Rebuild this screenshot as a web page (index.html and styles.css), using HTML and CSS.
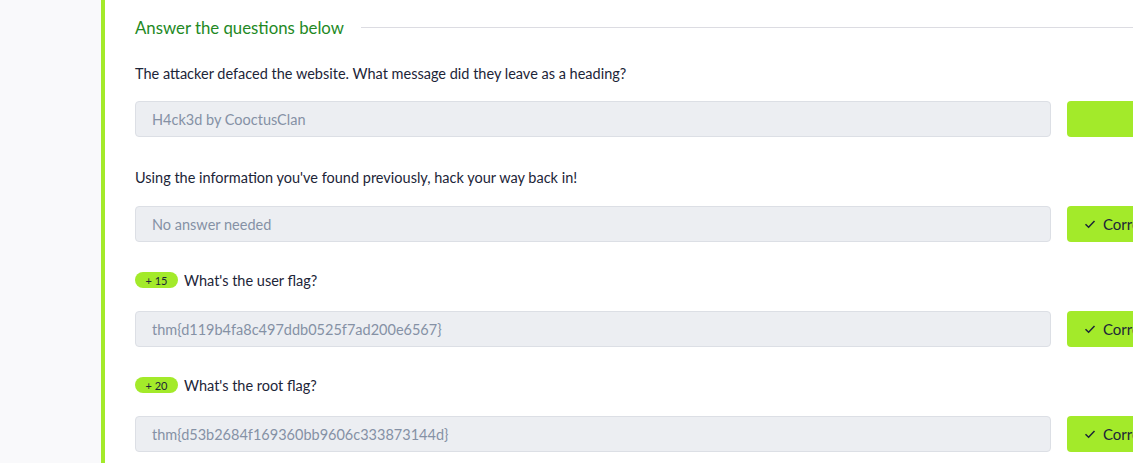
FILE: index.html
```html
<!DOCTYPE html>
<html>
<head>
<meta charset="utf-8">
<link rel="stylesheet" href="styles.css">
</head>
<body>
<div class="page">
  <aside class="sidebar"></aside>
  <main class="content">
    <div class="heading-row">
      <h2 class="heading">Answer the questions below</h2>
      <div class="rule"></div>
    </div>

    <section class="question">
      <p class="qtext">The attacker defaced the website. What message did they leave as a heading?</p>
      <div class="answer-row">
        <div class="answer">H4ck3d by CooctusClan</div>
        <div class="btn"></div>
      </div>
    </section>

    <section class="question">
      <p class="qtext">Using the information you've found previously, hack your way back in!</p>
      <div class="answer-row">
        <div class="answer">No answer needed</div>
        <div class="btn"><svg class="check" viewBox="0 0 12 12"><path d="M1.5 6.2 L4.6 9.2 L10.5 3" fill="none" stroke="#1c2538" stroke-width="1.5"/></svg><span>Correct Answer</span></div>
      </div>
    </section>

    <section class="question bonus">
      <p class="qtext"><span class="badge">+ 15</span>What's the user flag?</p>
      <div class="answer-row">
        <div class="answer">thm{d119b4fa8c497ddb0525f7ad200e6567}</div>
        <div class="btn"><svg class="check" viewBox="0 0 12 12"><path d="M1.5 6.2 L4.6 9.2 L10.5 3" fill="none" stroke="#1c2538" stroke-width="1.5"/></svg><span>Correct Answer</span></div>
      </div>
    </section>

    <section class="question bonus">
      <p class="qtext"><span class="badge">+ 20</span>What's the root flag?</p>
      <div class="answer-row">
        <div class="answer">thm{d53b2684f169360bb9606c333873144d}</div>
        <div class="btn"><svg class="check" viewBox="0 0 12 12"><path d="M1.5 6.2 L4.6 9.2 L10.5 3" fill="none" stroke="#1c2538" stroke-width="1.5"/></svg><span>Correct Answer</span></div>
      </div>
    </section>
  </main>
</div>
</body>
</html>
```

FILE: styles.css
```css
* { box-sizing: border-box; }
html, body { margin: 0; padding: 0; }
body {
  font-family: Lato, "Open Sans", sans-serif;
  background: #ffffff;
  overflow: hidden;
}
.page {
  display: flex;
  width: 1133px;
  height: 463px;
  overflow: hidden;
}
.sidebar {
  flex: none;
  width: 105px;
  background: #f9f9fb;
  border-right: 4px solid #a3ea2a;
}
.content {
  flex: none;
  width: 1100px;
  padding: 14px 0 0 30px;
}
.heading-row {
  display: flex;
  align-items: center;
  gap: 17px;
  height: 26px;
}
.heading {
  margin: 0;
  font-size: 16.8px;
  font-weight: 400;
  color: #23891f;
  white-space: nowrap;
}
.rule {
  flex: 1;
  height: 1px;
  background: #dcdce2;
}
.question {
  margin-top: 20px;
}
.question + .question { margin-top: 27px; }
.question.bonus { margin-top: 25px; }
.qtext {
  margin: 0;
  height: 26px;
  display: flex;
  align-items: center;
  font-size: 14.5px;
  color: #1c2538;
}
.answer-row {
  display: flex;
  gap: 16px;
  margin-top: 15px;
}
.question + .question .answer-row { margin-top: 16px; }
.question.bonus .answer-row { margin-top: 18px; }
.answer {
  width: 916px;
  height: 36px;
  flex: none;
  background: #eceef2;
  border: 1px solid #dcdfe5;
  border-radius: 4px;
  padding-left: 16px;
  display: flex;
  align-items: center;
  font-size: 14.5px;
  color: #8591a5;
}
.btn {
  flex: none;
  width: 160px;
  height: 36px;
  background: #a3ea2a;
  border-radius: 4px;
  display: flex;
  align-items: center;
  padding-left: 17px;
  gap: 7px;
  font-size: 15px;
  color: #1c2538;
  white-space: nowrap;
}
.check { width: 12px; height: 12px; }
.badge {
  display: inline-flex;
  align-items: center;
  justify-content: center;
  width: 43px;
  height: 16px;
  border-radius: 8px;
  background: #a3ea2a;
  font-size: 11px;
  color: #1c2538;
  margin-right: 6px;
}
```
